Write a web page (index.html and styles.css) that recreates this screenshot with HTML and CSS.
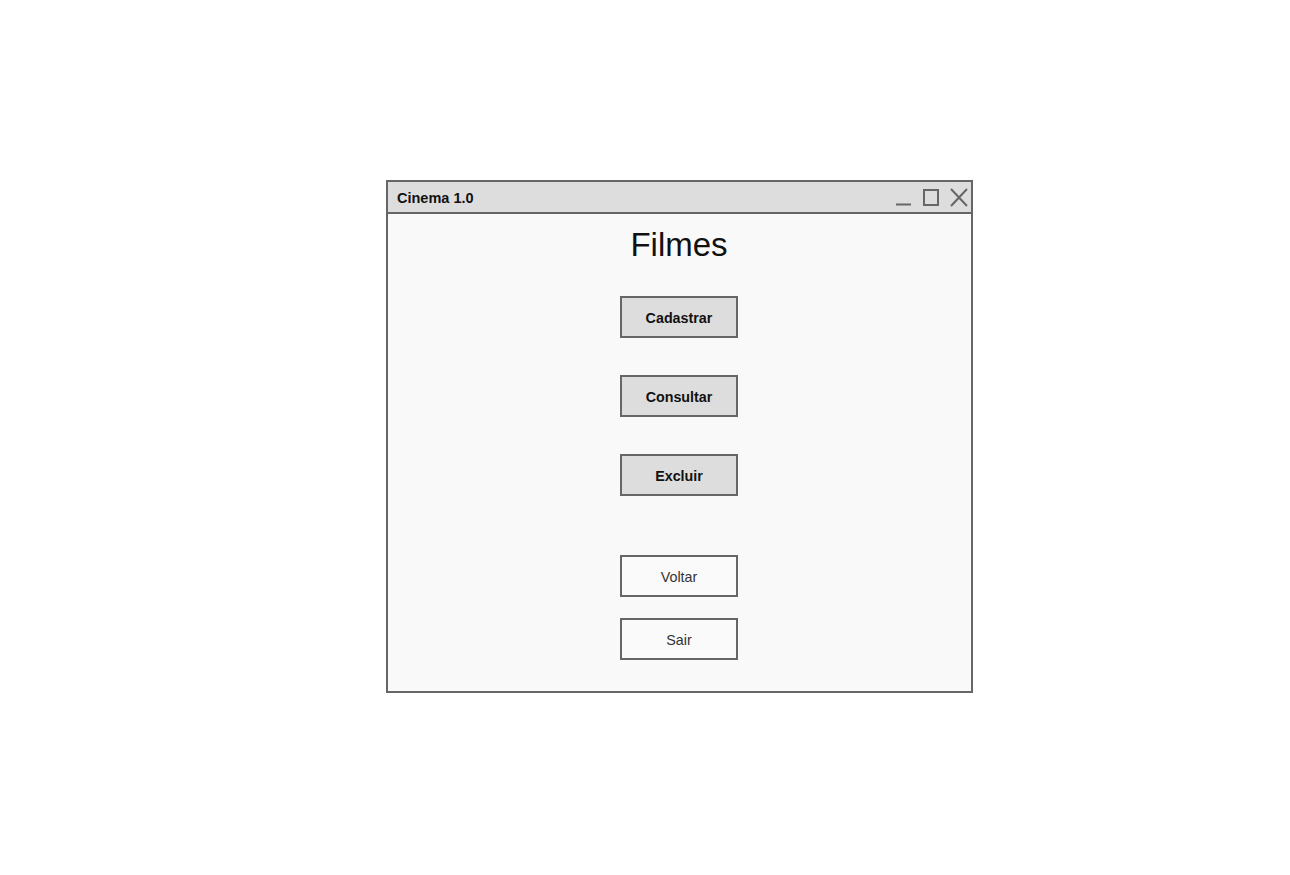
FILE: index.html
```html
<!DOCTYPE html>
<html>
<head>
<meta charset="utf-8">
<link rel="stylesheet" href="styles.css">
</head>
<body>
<div class="window">
  <div class="titlebar">
    <span class="title">Cinema 1.0</span>
    <div class="controls">
      <svg width="80" height="30" viewBox="0 0 80 30">
        <line x1="5" y1="22.5" x2="20" y2="22.5" stroke="#666" stroke-width="2"/>
        <rect x="33" y="8" width="14" height="15" fill="none" stroke="#666" stroke-width="2"/>
        <path d="M60 7 L76 24 M76 7 L60 24" stroke="#666" stroke-width="2" fill="none"/>
      </svg>
    </div>
  </div>
  <div class="content">
    <h1 class="heading">Filmes</h1>
    <button class="btn btn-primary">Cadastrar</button>
    <button class="btn btn-primary gap-md">Consultar</button>
    <button class="btn btn-primary gap-md">Excluir</button>
    <button class="btn btn-plain gap-lg">Voltar</button>
    <button class="btn btn-plain gap-sm">Sair</button>
  </div>
</div>
</body>
</html>
```

FILE: styles.css
```css
html, body {
  margin: 0;
  padding: 0;
  background: #ffffff;
}
body {
  font-family: "Liberation Sans", Arial, sans-serif;
  padding: 180px 0 0 386px;
}
.window {
  box-sizing: border-box;
  width: 587px;
  height: 513px;
  border: 2px solid #666666;
  background: #f9f9f9;
  display: flex;
  flex-direction: column;
}
.titlebar {
  height: 30px;
  background: #dddddd;
  border-bottom: 2px solid #666666;
  display: flex;
  align-items: center;
  justify-content: space-between;
  padding-left: 9px;
}
.title {
  font-weight: bold;
  font-size: 14.5px;
  color: #111;
  padding-top: 1px;
}
.controls {
  display: flex;
  align-items: center;
  height: 30px;
}
.controls svg {
  display: block;
}
.content {
  display: flex;
  flex-direction: column;
  align-items: center;
  padding-right: 1px;
}
.heading {
  margin: 11px 0 0 0;
  font-size: 33px;
  line-height: 40px;
  font-weight: normal;
  color: #111;
}
.btn {
  box-sizing: border-box;
  width: 118px;
  height: 42px;
  border: 2px solid #666666;
  font-family: "Liberation Sans", Arial, sans-serif;
  font-size: 14.3px;
  padding: 2px 0 0 0;
  margin: 0;
}
.btn-primary {
  margin-top: 31px;
  background: #dddddd;
  font-weight: bold;
  color: #111;
}
.btn-primary.gap-md {
  margin-top: 37px;
}
.btn-plain {
  background: #fafafa;
  color: #333;
}
.gap-lg {
  margin-top: 59px;
}
.gap-sm {
  margin-top: 21px;
}
```
